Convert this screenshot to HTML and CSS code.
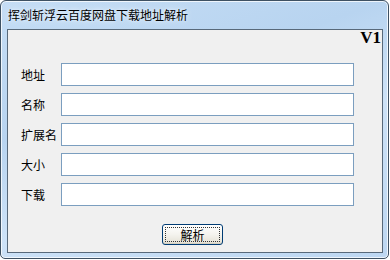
FILE: index.html
```html
<!DOCTYPE html>
<html lang="zh">
<head>
<meta charset="utf-8">
<title>挥剑斩浮云百度网盘下载地址解析</title>
<link rel="stylesheet" href="styles.css">
</head>
<body>
<div class="window">
  <div class="titlebar">挥剑斩浮云百度网盘下载地址解析</div>
  <div class="client">
    <div class="header"><span class="version">V1</span></div>
    <div class="form">
      <label class="label">地址</label><input class="field" type="text">
      <label class="label">名称</label><input class="field" type="text">
      <label class="label">扩展名</label><input class="field" type="text">
      <label class="label">大小</label><input class="field" type="text">
      <label class="label">下载</label><input class="field" type="text">
    </div>
    <div class="actions"><button class="btn" type="button"><span class="btn-focus">解析</span></button></div>
  </div>
</div>
</body>
</html>
```
FILE: styles.css
```css
html, body {
  margin: 0;
  padding: 0;
  background: #ffffff;
}
body {
  width: 390px;
  height: 260px;
  overflow: hidden;
  font-family: "Noto Sans CJK SC", "Noto Sans", sans-serif;
  font-size: 12px;
  color: #000;
}
.window {
  box-sizing: border-box;
  width: 389px;
  height: 259px;
  border: 1px solid #3e5163;
  border-radius: 6px 6px 5px 5px;
  background: linear-gradient(160deg, #c5ddf5 0%, #b8d4f0 35%, #cde2f7 60%, #bdd7f2 100%);
  box-shadow: inset 0 0 0 1px rgba(255, 255, 255, 0.75);
  display: flex;
  flex-direction: column;
}
.titlebar {
  height: 28px;
  line-height: 28px;
  padding-left: 7px;
  font-size: 12px;
  color: #000;
  text-shadow: 0 0 6px #e8f2fc, 0 0 3px #e8f2fc;
}
.client {
  box-sizing: border-box;
  margin: 0 5px 5px 6px;
  flex: 1;
  border: 1px solid #58697a;
  background: #f0f0f0;
  display: flex;
  flex-direction: column;
}
.header {
  height: 33px;
  display: flex;
  justify-content: flex-end;
  align-items: flex-start;
}
.version {
  font-family: "Liberation Serif", serif;
  font-weight: bold;
  font-size: 17px;
  line-height: 15px;
  margin-right: 1px;
}
.form {
  display: grid;
  grid-template-columns: 40px 293px;
  grid-auto-rows: 23px;
  row-gap: 7px;
  padding-left: 13px;
  align-items: center;
}
.label {
  font-size: 12px;
  line-height: 14px;
}
.field {
  box-sizing: border-box;
  width: 293px;
  height: 23px;
  margin: 0;
  border: 1px solid #7b9ebf;
  background: #fff;
  padding: 0 3px;
  outline: none;
}
.actions {
  display: flex;
  padding-left: 154px;
  margin-top: 18px;
}
.btn {
  box-sizing: border-box;
  width: 61px;
  height: 21px;
  padding: 2px;
  margin: 0;
  border: 1px solid #003c74;
  border-radius: 3px;
  background: linear-gradient(#ffffff 0%, #f4f3ee 50%, #e3e0d4 100%);
  box-shadow: inset 0 -1px 0 #d6d0c0;
  font-family: "Noto Sans CJK SC", sans-serif;
  font-size: 12px;
  color: #000;
  display: flex;
}
.btn-focus {
  flex: 1;
  border: 1px dotted #333;
  line-height: 13px;
  text-align: center;
}
```
